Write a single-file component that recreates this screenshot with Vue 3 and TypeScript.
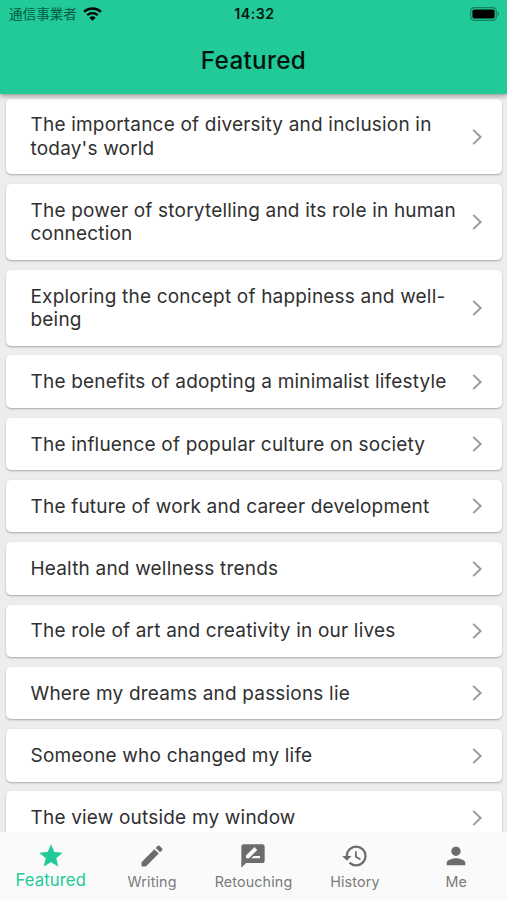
<script setup lang="ts">
interface Tab {
  label: string
  path: string
  active?: boolean
}

const topics: string[] = [
  "The importance of diversity and inclusion in today's world",
  'The power of storytelling and its role in human connection',
  'Exploring the concept of happiness and well-being',
  'The benefits of adopting a minimalist lifestyle',
  'The influence of popular culture on society',
  'The future of work and career development',
  'Health and wellness trends',
  'The role of art and creativity in our lives',
  'Where my dreams and passions lie',
  'Someone who changed my life',
  'The view outside my window',
]

const tabs: Tab[] = [
  { label: 'Featured', active: true, path: 'M12 17.27 18.18 21l-1.64-7.03L22 9.24l-7.19-.61L12 2 9.19 8.63 2 9.24l5.46 4.73L5.82 21z' },
  { label: 'Writing', path: 'M3 17.25V21h3.75L17.81 9.94l-3.75-3.75L3 17.25zM20.71 7.04a1 1 0 0 0 0-1.41l-2.34-2.34a1 1 0 0 0-1.41 0l-1.83 1.83 3.75 3.75 1.83-1.83z' },
  { label: 'Retouching', path: 'M20 2H4c-1.1 0-1.99.9-1.99 2L2 22l4-4h14c1.1 0 2-.9 2-2V4c0-1.1-.9-2-2-2zM6 14v-2.47l6.88-6.88c.2-.2.51-.2.71 0l1.77 1.77c.2.2.2.51 0 .71L8.47 14H6zm12 0h-7.5l2-2H18v2z' },
  { label: 'History', path: 'M13 3a9 9 0 0 0-9 9H1l3.89 3.89.07.14L9 12H6c0-3.87 3.13-7 7-7s7 3.13 7 7-3.13 7-7 7c-1.93 0-3.68-.79-4.94-2.06l-1.42 1.42A8.954 8.954 0 0 0 13 21a9 9 0 0 0 0-18zm-1 5v5l4.28 2.54.72-1.21-3.5-2.08V8H12z' },
  { label: 'Me', path: 'M12 12c2.21 0 4-1.79 4-4s-1.79-4-4-4-4 1.79-4 4 1.79 4 4 4zm0 2c-2.67 0-8 1.34-8 4v2h16v-2c0-2.66-5.33-4-8-4z' },
]
</script>

<template>
  <div class="screen">
    <header class="header">
      <div class="status">
        <div class="carrier">
          <span>通信事業者</span>
          <svg class="wifi" viewBox="0 0 18 13">
            <path d="M1 4.5a11.7 11.7 0 0 1 16 0M4 7.6a7.4 7.4 0 0 1 10 0" fill="none" stroke="currentColor" stroke-width="2.3" />
            <path d="M6.1 10a4.3 4.3 0 0 1 5.8 0L9 13z" fill="currentColor" />
          </svg>
        </div>
        <time class="clock">14:32</time>
        <svg class="battery" viewBox="0 0 30 14">
          <rect x=".7" y=".7" width="25.6" height="12.6" rx="3.6" fill="none" stroke="#15825f" stroke-width="1.2" />
          <rect x="2.4" y="2.4" width="22.2" height="9.2" rx="1.8" fill="#000" />
          <path d="M27.6 4.8c2 .8 2 3.6 0 4.4z" fill="#15825f" />
        </svg>
      </div>
      <h1 class="title">Featured</h1>
    </header>
    <main class="list">
      <article v-for="topic in topics" :key="topic" class="card">
        <p class="topic">{{ topic }}</p>
        <svg class="chevron" viewBox="0 0 12 18"><path d="m2.2 1.9 7.4 7.1-7.4 7.1" /></svg>
      </article>
    </main>
    <nav class="tabs">
      <a v-for="tab in tabs" :key="tab.label" class="tab" :class="{ active: tab.active }">
        <svg class="icon" viewBox="0 0 24 24"><path :d="tab.path" /></svg>
        <span class="label">{{ tab.label }}</span>
      </a>
    </nav>
  </div>
</template>

<style>
body {
  margin: 0;
  overflow: hidden;
}
</style>

<style scoped>
.screen {
  display: flex;
  flex-direction: column;
  width: 507px;
  height: 900px;
  overflow: hidden;
  background: #ededed;
  font-family: Inter, "Noto Sans CJK JP", sans-serif;
}
.header {
  position: relative;
  z-index: 1;
  flex: none;
  height: 94px;
  background: #21ca98;
  box-shadow: 0 2px 5px rgba(0, 0, 0, 0.36);
}
.status {
  display: grid;
  grid-template-columns: 1fr auto 1fr;
  align-items: center;
  height: 27px;
  padding: 0 7px 0 9px;
}
.carrier {
  display: flex;
  align-items: center;
  gap: 6px;
  color: #075c43;
  font-size: 13.6px;
  line-height: 20px;
}
.wifi {
  width: 19px;
  height: 14px;
  color: #000;
}
.clock {
  color: #03150f;
  font-size: 14.2px;
  font-weight: 600;
  letter-spacing: 0.5px;
}
.battery {
  justify-self: end;
  width: 30px;
  height: 14px;
}
.title {
  margin: 0;
  color: #03150f;
  font-size: 24.3px;
  font-weight: 500;
  line-height: 66px;
  letter-spacing: 0.3px;
  text-align: center;
}
.list {
  display: flex;
  flex: 1;
  flex-direction: column;
  gap: 9.8px;
  min-height: 0;
  overflow: hidden;
  padding: 4.6px 5px 0 6px;
}
.card {
  display: flex;
  flex: none;
  align-items: center;
  justify-content: space-between;
  box-sizing: border-box;
  min-height: 52.5px;
  padding: 14.9px 19px 14.3px 24.5px;
  border-radius: 5px;
  background: #fff;
  box-shadow: 0 1px 2px rgba(0, 0, 0, 0.3);
}
.topic {
  width: 432px;
  margin: 0;
  color: #303030;
  font-size: 19px;
  line-height: 23.3px;
  letter-spacing: 0.19px;
}
.chevron {
  flex: none;
  width: 12px;
  height: 18px;
  fill: none;
  stroke: #999;
  stroke-width: 2;
}
.tabs {
  display: grid;
  flex: none;
  grid-template-columns: repeat(5, 1fr);
  height: 68px;
  background: #fafafa;
}
.tab {
  display: flex;
  flex-direction: column;
  align-items: center;
  padding-top: 9.6px;
  color: #7a7a7a;
  font-size: 14.3px;
  letter-spacing: 0.15px;
}
.icon {
  width: 28px;
  height: 28px;
  fill: #6c6c6c;
}
.label {
  line-height: 23px;
  white-space: nowrap;
}
.active {
  color: #21ca98;
  font-size: 16.6px;
}
.active .icon {
  fill: #21ca98;
}
.active .label {
  line-height: 21px;
}
</style>
